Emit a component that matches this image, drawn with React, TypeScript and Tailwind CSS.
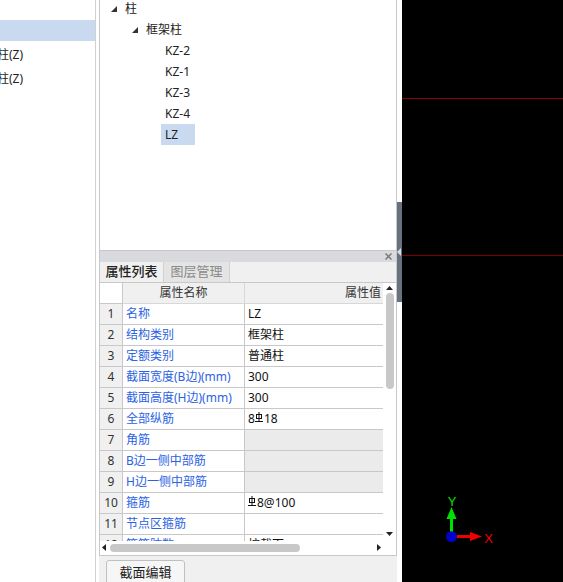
import React from 'react';

type Row = {
    no: string;
    name: string;
    value: React.ReactNode;
    locked?: boolean;
};

const Rebar: React.FC = () => (
    <svg width="8" height="10" viewBox="0 0 8 10" className="mb-[4px] mr-[1px] shrink-0">
        <line x1="4" y1="0" x2="4" y2="9" stroke="#111" strokeWidth="1" />
        <rect x="1.5" y="2.5" width="5" height="4" fill="none" stroke="#111" strokeWidth="1" />
        <line x1="0" y1="9.5" x2="8" y2="9.5" stroke="#111" strokeWidth="1" />
    </svg>
);

const rows: Row[] = [
    { no: '1', name: '名称', value: 'LZ' },
    { no: '2', name: '结构类别', value: '框架柱' },
    { no: '3', name: '定额类别', value: '普通柱' },
    { no: '4', name: '截面宽度(B边)(mm)', value: '300' },
    { no: '5', name: '截面高度(H边)(mm)', value: '300' },
    { no: '6', name: '全部纵筋', value: <>8<Rebar />18</> },
    { no: '7', name: '角筋', value: '', locked: true },
    { no: '8', name: 'B边一侧中部筋', value: '', locked: true },
    { no: '9', name: 'H边一侧中部筋', value: '', locked: true },
    { no: '10', name: '箍筋', value: <><Rebar />8@100</> },
    { no: '11', name: '节点区箍筋', value: '' },
    { no: '12', name: '箍筋肢数', value: '按截面' },
];

const Expander: React.FC = () => (
    <svg width="6" height="6" viewBox="0 0 6 6" className="shrink-0">
        <polygon points="6,0 6,6 0,6" fill="#333" />
    </svg>
);

const TreeRow: React.FC<{ children: React.ReactNode; className?: string }> = ({ children, className }) => (
    <div className={`h-[21px] flex items-center ${className ?? ''}`}>{children}</div>
);

export default function App() {
    return (
        <div className="w-[563px] h-[582px] flex overflow-hidden bg-white text-[12px] text-[#222] font-['Noto_Sans','Noto_Sans_CJK_SC',sans-serif]">
            {/* left list */}
            <div className="w-[96px] h-full shrink-0 bg-white border-r border-[#d0d0d0] flex flex-col overflow-hidden">
                <div className="mt-[20px] h-[21px] bg-[#c9daf0]" />
                <div className="mt-[2px] h-[24px] flex items-center ml-[-3px] whitespace-nowrap">柱(Z)</div>
                <div className="h-[23px] flex items-center ml-[-3px] whitespace-nowrap">柱(Z)</div>
            </div>
            <div className="w-[3px] h-full shrink-0 bg-white" />

            {/* middle column */}
            <div className="w-[298px] h-full shrink-0 flex flex-col bg-[#f0f0f0]">
                {/* tree */}
                <div className="h-[250px] shrink-0 bg-white border-l border-r border-[#c8c8c8] overflow-hidden">
                    <div className="mt-[-2px] flex flex-col">
                        <TreeRow className="pl-[11px] gap-[8px]">
                            <Expander />
                            <span>柱</span>
                        </TreeRow>
                        <TreeRow className="pl-[32px] gap-[8px]">
                            <Expander />
                            <span>框架柱</span>
                        </TreeRow>
                        {['KZ-2', 'KZ-1', 'KZ-3', 'KZ-4'].map((k) => (
                            <TreeRow key={k} className="pl-[65px]">
                                {k}
                            </TreeRow>
                        ))}
                        <TreeRow className="pl-[61px]">
                            <span className="h-[21px] w-[34px] px-[4px] flex items-center bg-[#c9daf0]">LZ</span>
                        </TreeRow>
                    </div>
                </div>

                {/* property panel */}
                <div className="h-[306px] shrink-0 bg-white border border-[#c8c8c8] flex flex-col">
                    <div className="h-[11px] shrink-0 bg-[#d9dadd] flex items-center justify-end pr-[4px]">
                        <svg width="7" height="7" viewBox="0 0 7 7">
                            <path d="M0.5 0.5 L6.5 6.5 M6.5 0.5 L0.5 6.5" stroke="#7a7a7a" strokeWidth="1.5" />
                        </svg>
                    </div>
                    <div className="h-[21px] shrink-0 bg-[#f0f0f0] flex border-b border-[#c8c8c8]">
                        <div className="w-[64px] h-full flex items-center justify-center border-r border-[#d0d0d0] text-[13px] text-[#222] font-medium">
                            属性列表
                        </div>
                        <div className="w-[66px] h-full flex items-center justify-center bg-[#e4e4e4] border-r border-[#d0d0d0] text-[13px] text-[#8a8a8a]">
                            图层管理
                        </div>
                    </div>

                    <div className="h-[258px] shrink-0 flex">
                        <div className="w-[283px] h-full overflow-hidden">
                            <div className="grid grid-cols-[23px_122px_138px]">
                                <div className="h-[21px] bg-white border-r border-b border-[#c8c8c8]" />
                                <div className="h-[21px] bg-[#f0f0f0] border-r border-b border-[#d8d8d8] flex items-center justify-center text-[#333]">
                                    属性名称
                                </div>
                                <div className="h-[21px] bg-[#f0f0f0] border-b border-[#d8d8d8] flex items-center justify-end pr-[2px] text-[#333]">
                                    属性值
                                </div>
                                {rows.map((r) => (
                                    <React.Fragment key={r.no}>
                                        <div className="h-[21px] bg-[#f0f0f0] border-r border-b border-[#c8c8c8] flex items-center justify-center text-[#333]">
                                            {r.no}
                                        </div>
                                        <div className="h-[21px] bg-white border-r border-b border-[#c8c8c8] flex items-center pl-[3px] text-[#2b62e3] whitespace-nowrap overflow-hidden">
                                            {r.name}
                                        </div>
                                        <div
                                            className={`h-[21px] border-b border-[#c8c8c8] flex items-center pl-[3px] text-[#111] whitespace-nowrap ${
                                                r.locked ? 'bg-[#ebebeb]' : 'bg-white'
                                            }`}
                                        >
                                            {r.value}
                                        </div>
                                    </React.Fragment>
                                ))}
                            </div>
                        </div>
                        {/* vertical scrollbar */}
                        <div className="w-[13px] h-full bg-white flex flex-col items-center">
                            <svg width="7" height="4" viewBox="0 0 7 4" className="mt-[3px]">
                                <polygon points="0,4 7,4 3.5,0" fill="#222" />
                            </svg>
                            <div className="mt-[3px] w-[8px] h-[96px] rounded-full bg-[#c8c8c8]" />
                            <div className="flex-1" />
                            <svg width="7" height="4" viewBox="0 0 7 4" className="mb-[5px]">
                                <polygon points="0,0 7,0 3.5,4" fill="#222" />
                            </svg>
                        </div>
                    </div>

                    {/* horizontal scrollbar */}
                    <div className="h-[13px] shrink-0 bg-white flex items-center pl-[2px]">
                        <svg width="4" height="7" viewBox="0 0 4 7">
                            <polygon points="4,0 4,7 0,3.5" fill="#222" />
                        </svg>
                        <div className="ml-[4px] w-[190px] h-[8px] rounded-full bg-[#c8c8c8]" />
                        <div className="w-[77px]" />
                        <svg width="4" height="7" viewBox="0 0 4 7">
                            <polygon points="0,0 0,7 4,3.5" fill="#222" />
                        </svg>
                    </div>
                </div>

                {/* bottom toolbar */}
                <div className="flex-1 min-h-0 overflow-hidden pl-[7px] pt-[4px]">
                    <button className="w-[79px] h-[26px] rounded-[3px] border border-[#c0c0c0] bg-[#f6f6f6] text-[13px] text-[#222] flex items-center justify-center">
                        截面编辑
                    </button>
                </div>
            </div>

            {/* splitter */}
            <div className="w-[5px] h-full shrink-0 bg-white flex flex-col">
                <div className="mt-[202px] h-[100px] bg-[#68727e] flex flex-col">
                    <svg width="4" height="8" viewBox="0 0 4 8" className="mt-[46px]">
                        <polygon points="4,0 4,8 0,4" fill="#d8dce2" />
                    </svg>
                </div>
            </div>

            {/* drawing canvas */}
            <div className="w-[161px] h-full shrink-0 bg-black">
                <svg width="161" height="582" viewBox="0 0 161 582">
                    <line x1="0" y1="98.5" x2="161" y2="98.5" stroke="#8c0000" strokeWidth="1" />
                    <line x1="0" y1="255.5" x2="161" y2="255.5" stroke="#7a0000" strokeWidth="1" />
                    <rect x="48" y="518" width="3" height="14" fill="#00e000" />
                    <polygon points="44.5,519 54.5,519 49.5,507" fill="#00e000" />
                    <rect x="55" y="535" width="14" height="3" fill="#f00000" />
                    <polygon points="68,532 68,541 80,536.5" fill="#f00000" />
                    <circle cx="49.5" cy="536.7" r="5.5" fill="#0000c8" />
                    <text x="50" y="506" textAnchor="middle" fill="#00e000" fontSize="13" fontFamily="'Liberation Sans', sans-serif">
                        Y
                    </text>
                    <text x="86.5" y="543" textAnchor="middle" fill="#f00000" fontSize="13" fontFamily="'Liberation Sans', sans-serif">
                        X
                    </text>
                </svg>
            </div>
        </div>
    );
}
